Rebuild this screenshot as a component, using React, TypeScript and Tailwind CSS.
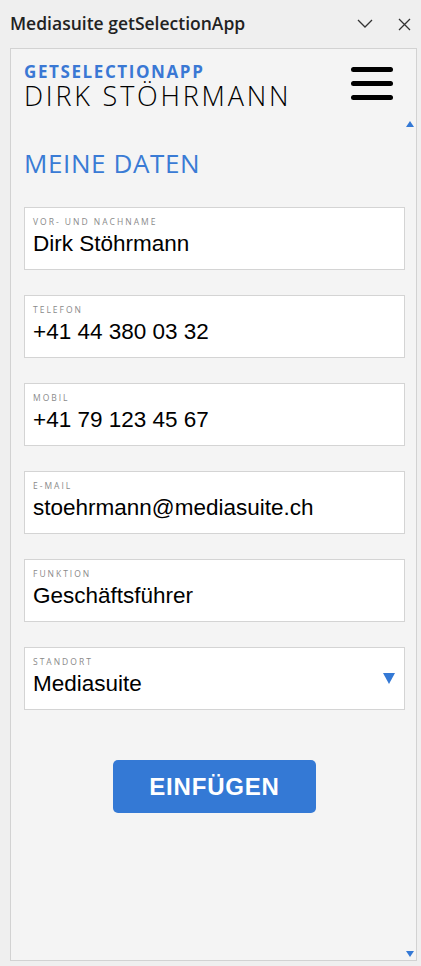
import React from "react";

const fields = [
  { label: "VOR- UND NACHNAME", value: "Dirk Stöhrmann" },
  { label: "TELEFON", value: "+41 44 380 03 32" },
  { label: "MOBIL", value: "+41 79 123 45 67" },
  { label: "E-MAIL", value: "stoehrmann@mediasuite.ch" },
  { label: "FUNKTION", value: "Geschäftsführer" },
];

function Field({ label, value, select }: { label: string; value: string; select?: boolean }) {
  return (
    <div className="relative h-[63px] w-[381px] border border-[#d4d4d4] bg-white pl-[8px]">
      <div className="pt-[9px] text-[8.5px] leading-[10px] tracking-[2px] text-[#8a8a8a] [font-family:'Open_Sans',sans-serif]">
        {label}
      </div>
      <div className="mt-[3px] text-[22.5px] leading-[28px] text-black [font-family:'Liberation_Sans',Arial,sans-serif]">
        {value}
      </div>
      {select && (
        <svg className="absolute right-[9px] top-[25px]" width="12" height="11" viewBox="0 0 12 11">
          <path d="M0 0 H12 L6 11 Z" fill="#3479d5" />
        </svg>
      )}
    </div>
  );
}

export default function App() {
  return (
    <div className="flex h-[966px] w-[421px] flex-col bg-[#efefef] [font-family:'Open_Sans',sans-serif]">
      <div className="flex h-[48px] items-center pl-[10px] pr-[10px]">
        <div className="flex-1 pb-[1px] text-[17.5px] font-semibold text-[#222]">Mediasuite getSelectionApp</div>
        <svg width="16" height="10" viewBox="0 0 16 10" className="mr-[25px]">
          <path d="M1 1 L8 8 L15 1" fill="none" stroke="#333" strokeWidth="1.3" />
        </svg>
        <svg width="13" height="13" viewBox="0 0 13 13">
          <path d="M1 1 L12 12 M12 1 L1 12" fill="none" stroke="#333" strokeWidth="1.3" />
        </svg>
      </div>
      <div className="relative ml-[10px] mr-[4px] mb-[5px] flex-1 border border-[#d2d2d2] bg-[#f4f4f4] pl-[13px]">
        <div className="flex items-start justify-between pr-[23px] pt-[14px]">
          <div>
            <div className="text-[17px] font-bold leading-[18px] tracking-[1.6px] text-[#3a78d4]">GETSELECTIONAPP</div>
            <div className="text-[27px] font-light leading-[30px] tracking-[2.8px] text-black">DIRK STÖHRMANN</div>
          </div>
          <div className="mt-[4px] flex flex-col gap-[9px]">
            <div className="h-[5px] w-[42px] rounded-full bg-black" />
            <div className="h-[5px] w-[42px] rounded-full bg-black" />
            <div className="h-[5px] w-[42px] rounded-full bg-black" />
          </div>
        </div>
        <svg className="absolute right-[2px] top-[72px]" width="8" height="6" viewBox="0 0 8 6">
          <path d="M0 6 H8 L4 0 Z" fill="#3479d5" />
        </svg>
        <div className="mt-[36px] text-[26px] font-normal leading-[32px] tracking-[0.6px] text-[#3a7bd5]">MEINE DATEN</div>
        <div className="mt-[28px] flex flex-col gap-[25px]">
          {fields.map((f) => (
            <Field key={f.label} label={f.label} value={f.value} />
          ))}
          <Field label="STANDORT" value="Mediasuite" select />
        </div>
        <div className="mt-[50px] flex w-[381px] justify-center">
          <button className="h-[53px] w-[203px] rounded-[5px] bg-[#3479d5] text-[24px] font-bold tracking-[0.8px] text-white [font-family:'Liberation_Sans',Arial,sans-serif]">
            EINFÜGEN
          </button>
        </div>
        <svg className="absolute bottom-[3px] right-[2px]" width="8" height="6" viewBox="0 0 8 6">
          <path d="M0 0 H8 L4 6 Z" fill="#3479d5" />
        </svg>
      </div>
    </div>
  );
}
